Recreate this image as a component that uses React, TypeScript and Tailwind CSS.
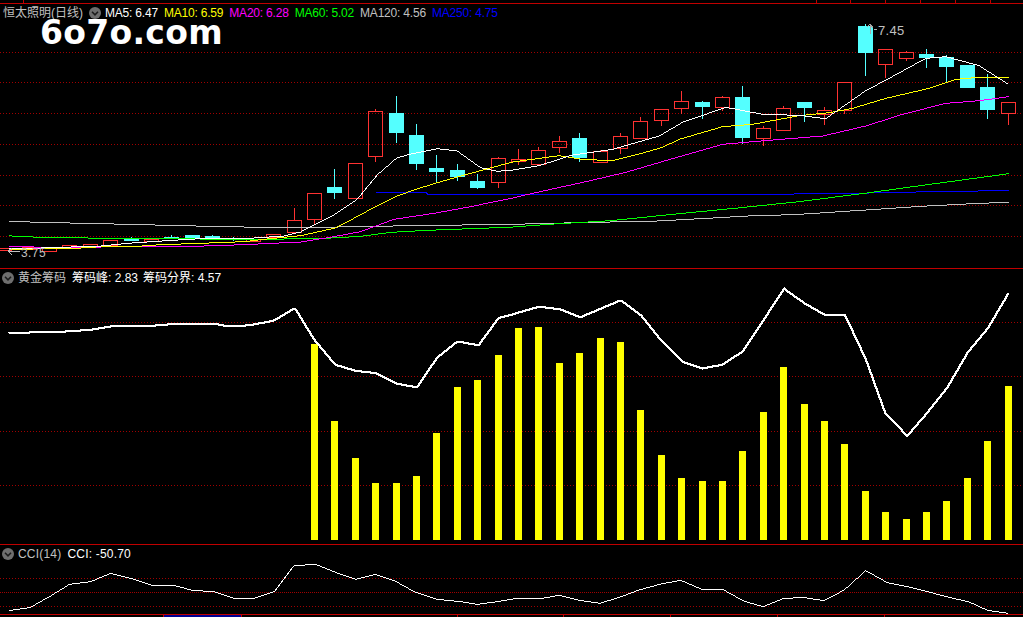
import React from "react";

type P = [number, number];
const L = (pts: P[]): P[] => pts.map(([x, y]) => [x / 3, y / 3]);
const R = (pts: P[]): P[] => pts.map(([x, y]) => [512 + x / 3, y / 3]);
// Resample a drawn series once per pixel column, so it renders as an aliased chart line.
const str = (pts: P[]) => {
  const out: string[] = [];
  for (let i = 0; i < pts.length - 1; i++) {
    const [x0, y0] = pts[i];
    const [x1, y1] = pts[i + 1];
    for (let x = Math.ceil(x0); x < x1; x++) {
      const y = y0 + ((y1 - y0) * (x - x0)) / (x1 - x0);
      out.push(`${x + 0.5},${Math.floor(y) + 0.5}`);
    }
  }
  return out.join(" ");
};

const ma120 = [...L([[24,664],[120,667],[300,671],[425,674],[545,677],[670,680],[850,683],[1095,680],[1220,677],[1465,674],[1536,673]]), ...R([[230,667],[415,664],[600,654],[725,647],[845,644],[1090,628],[1225,619],[1400,610],[1489,607]])];
const ma60 = [...L([[24,707],[57,710],[180,713],[425,716],[600,717],[790,718],[972,715],[1080,709],[1170,697],[1280,691],[1465,684],[1536,681]]), ...R([[125,672],[295,662],[480,643],[675,624],[860,605],[1070,578],[1230,556],[1489,521]])];
const ma250 = [...L([[1125,578],[1280,578],[1281,582],[1536,583]]), ...R([[845,583],[846,581],[1070,581],[1071,578],[1210,578],[1211,575],[1395,575],[1396,572],[1489,572]])];
const ma20 = [...L([[24,740],[180,742],[425,740],[610,738],[730,734],[900,726],[1000,710],[1080,695],[1180,658],[1300,640],[1400,622],[1536,594]]), ...R([[60,580],[220,545],[340,517],[500,470],[630,433],[780,420],[930,408],[1060,378],[1170,343],[1300,310],[1400,302],[1489,290]])];
const ma10 = [...L([[24,748],[170,746],[240,744],[300,740],[425,738],[480,734],[600,730],[730,725],[790,718],[900,707],[1000,685],[1060,655],[1125,620],[1190,588],[1240,570],[1310,548],[1380,528],[1440,512],[1536,486]]), ...R([[140,467],[210,478],[300,482],[380,462],[450,442],[500,418],[630,380],[720,373],[860,347],[950,338],[1020,325],[1120,295],[1250,265],[1330,238],[1400,232],[1489,232]])];
const ma5 = [...L([[24,746],[120,744],[240,740],[300,738],[380,730],[500,722],[600,716],[730,716],[850,708],[900,696],[1000,645],[1070,598],[1130,525],[1190,473],[1240,460],[1310,446],[1370,453],[1440,503],[1490,514],[1536,510]]), ...R([[80,497],[180,465],[300,448],[440,408],[510,367],[640,322],[750,343],[860,346],[940,356],[1060,272],[1130,235],[1240,175],[1300,170],[1400,197],[1489,254]])];

const shift = (pts: P[], oy: number): P[] => pts.map(([x, y]) => [x, y + oy]);
const peak = [...shift(L([[24,204],[88,201],[180,199],[270,193],[330,183],[455,181],[515,176],[640,175],[680,182],[730,181],[760,177],[820,166],[883,129],[940,222],[1003,298],[1065,316],[1125,323],[1189,355],[1250,366],[1310,278],[1372,228],[1435,240],[1495,158]]), 265), ...shift(R([[0,147],[80,124],[140,131],[203,156],[325,105],[385,150],[445,225],[510,290],[570,309],[630,298],[692,258],[815,71],[877,115],[937,149],[997,149],[1060,283],[1118,443],[1184,513],[1243,445],[1303,370],[1366,262],[1426,190],[1489,83]]), 265)];
const cci = [...shift(L([[24,212],[88,203],[150,168],[207,133],[270,125],[330,100],[390,115],[455,136],[520,136],[575,151],[640,155],[700,175],[762,175],[822,154],[880,77],[945,73],[1005,97],[1065,118],[1125,103],[1185,124],[1245,157],[1310,178],[1380,185],[1430,193],[1490,185]]), 540), ...shift(R([[0,177],[90,175],[140,166],[200,181],[262,190],[320,172],[380,150],[445,132],[505,121],[570,149],[632,149],[695,184],[752,200],[812,176],[870,172],[935,182],[995,150],[1060,92],[1125,128],[1185,140],[1245,155],[1310,172],[1370,186],[1425,211],[1487,220]]), 540)];

// c, top, bottom, high, low, up
type C = [number, number, number, number, number, boolean];
const candles: C[] = [
  [4.5,248,250,248,250,true],[29.5,247,249,247,249,true],[49.5,248,251,248,251,true],[69.5,245,248,245,248,true],
  [90.5,244,246,244,246,true],[110.5,240,245,240,245,true],[131.5,239,239,237,241,false],[151.5,239,241,239,241,true],
  [171.5,237,238,235,238,false],[192.5,235,238,235,238,false],[212.5,236,237,235,238,false],[233.5,238,239,237,241,false],
  [253.5,239,241,239,241,true],[273.5,234,237,234,239,true],
  [294.5,220,232,208,232,true],[314.5,193,219,193,224,true],[334.5,187,192,169,199,false],[355.5,163,198,163,198,true],
  [375.5,111,156,109,162,true],[396.5,113,132,96,143,false],[416.5,135,163,124,170,false],[436.5,168,171,155,182,false],
  [457.5,170,176,164,181,false],[477.5,181,187,174,189,false],[498.5,158,182,157,188,true],[518.5,159,161,149,165,true],
  [538.5,150,164,147,164,true],[559.5,141,147,136,153,true],[579.5,138,157,133,162,false],[600.5,151,162,150,162,true],
  [620.5,136,148,133,154,true],[640.5,121,138,117,138,true],[661.5,109,120,109,126,true],[681.5,101,108,91,114,true],
  [702.5,102,106,101,119,false],[722.5,97,107,96,111,true],[742.5,97,137,86,144,false],[763.5,128,138,126,146,true],
  [783.5,108,130,106,130,true],[804.5,102,107,102,122,false],[824.5,110,114,107,125,true],[844.5,82,110,82,114,true],
  [865.5,26,52,24,76,false],[885.5,49,64,49,78,true],[906.5,52,58,51,61,true],[926.5,54,57,49,68,false],
  [946.5,57,66,55,82,false],[967.5,65,87,65,87,false],[987.5,87,109,74,119,false],[1008.5,102,113,102,125,true],
];

const bars: P[] = [
  [314.5,344],[334.5,421],[355.5,458],[375.5,483],[396.5,483],[416.5,476],[436.5,433],[457.5,387],[477.5,380],[498.5,355],
  [518.5,328],[538.5,327],[559.5,363],[579.5,353],[600.5,338],[620.5,342],[640.5,410],[661.5,455],[681.5,478],[702.5,481],
  [722.5,481],[742.5,451],[763.5,412],[783.5,367],[804.5,404],[824.5,421],[844.5,444],[865.5,491],[885.5,512],[906.5,519],
  [926.5,512],[946.5,501],[967.5,478],[987.5,441],[1008.5,386],
];

const Grid = ({ ys, dense = [] as number[] }: { ys: number[]; dense?: number[] }) => (
  <>
    {ys.map((y) => (
      <line key={y} x1={0} x2={1023} y1={y + 0.5} y2={y + 0.5} stroke="#a00000" shapeRendering="auto" strokeDasharray={dense.includes(y) ? "1 1" : "1 2"} />
    ))}
  </>
);

const Toggle = () => (
  <svg width="12" height="12" viewBox="0 0 12 12" className="shrink-0">
    <circle cx="6" cy="6" r="6" fill="#6e6e6e" />
    <path d="M3 4.8 L6 7.8 L9 4.8" fill="none" stroke="#1c1c1c" strokeWidth="1.6" />
  </svg>
);

const font = "font-['Liberation_Sans','Noto_Sans_CJK_SC',sans-serif]";

export default function App() {
  return (
    <div className={`w-[1023px] h-[617px] bg-black flex flex-col overflow-hidden text-xs leading-none whitespace-nowrap ${font}`}>
      {/* top time ticks */}
      <svg width="1023" height="3" className="block shrink-0">
        {[23, 816, 850, 885, 920, 955, 990].map((x) => (
          <rect key={x} x={x} y={0} width={1} height={3} fill="#c00000" />
        ))}
      </svg>

      {/* main pane */}
      <section className="relative h-[265px] shrink-0 border-t border-[#c00000]">
        <svg width="1023" height="264" viewBox="0 4 1023 264" shapeRendering="crispEdges" className="block">
          <Grid ys={[52, 82, 113, 144, 175, 205, 236]} />
          {candles.map(([c, t, b, h, l, up]) => {
            const col = up ? "#ff3232" : "#54ffff";
            return (
              <g key={c} stroke={col}>
                {h < t && <line x1={c} x2={c} y1={h} y2={t} />}
                {l > b && <line x1={c} x2={c} y1={b} y2={l} />}
                <rect x={c - 7} y={t + 0.5} width={14} height={Math.max(b - t, 1)} fill={up ? "none" : col} />
              </g>
            );
          })}
          <polyline points={str(ma120)} fill="none" stroke="#c0c0c0" />
          <polyline points={str(ma250)} fill="none" stroke="#0000ff" />
          <polyline points={str(ma60)} fill="none" stroke="#00ff00" />
          <polyline points={str(ma20)} fill="none" stroke="#ff00ff" />
          <polyline points={str(ma10)} fill="none" stroke="#ffff00" />
          <polyline points={str(ma5)} fill="none" stroke="#ffffff" />
          <path d="M8.5 251 L12 248 M8.5 251 L12 255 M8.5 251 L20 251" fill="none" stroke="#c0c0c0" />
          <path d="M870.5 24 L867 27 M870.5 24 L873 28 M870.5 24 L870.5 34 M874 29.5 L877 29.5" fill="none" stroke="#a8a8a8" />
        </svg>
        <header className="absolute left-[3px] top-[3px] flex items-center">
          <span className="text-[#c0c0c0] w-[86px]">恒太照明(日线)</span>
          <Toggle />
          <div className="flex gap-[6px] ml-[4px] tracking-[-0.2px]">
            <span className="text-white">MA5: 6.47</span>
            <span className="text-[#ffff00]">MA10: 6.59</span>
            <span className="text-[#ff00ff]">MA20: 6.28</span>
            <span className="text-[#00ff00]">MA60: 5.02</span>
            <span className="text-[#c0c0c0]">MA120: 4.56</span>
            <span className="text-[#0000ff]">MA250: 4.75</span>
          </div>
        </header>
        <div className="absolute left-[40px] top-[16px] text-[33px] leading-[26px] tracking-[0.3px] font-bold text-white font-['DejaVu_Sans',sans-serif]">
          6o7o.com
        </div>
        <span className="absolute left-[21px] top-[243px] text-[#c0c0c0] tracking-[0.4px]">3.75</span>
        <span className="absolute left-[878px] top-[20px] text-[#c0c0c0] text-[13px] tracking-[0.3px]">7.45</span>
      </section>

      {/* chip pane */}
      <section className="relative h-[276px] shrink-0 border-t border-[#c00000]">
        <svg width="1023" height="275" viewBox="0 269 1023 275" shapeRendering="crispEdges" className="block">
          <Grid ys={[322, 376, 431, 485]} />
          {bars.map(([c, t]) => (
            <rect key={c} x={c - 3.5} y={t} width={7} height={540 - t} fill="#ffff00" />
          ))}
          <polyline points={str(peak)} fill="none" stroke="#ffffff" strokeWidth="2" />
        </svg>
        <header className="absolute left-[2px] top-[3px] flex items-center">
          <Toggle />
          <span className="ml-[4px] text-[#c0c0c0]">黄金筹码</span>
          <span className="ml-[6px] text-white">筹码峰: 2.83</span>
          <span className="ml-[5px] text-white">筹码分界: 4.57</span>
        </header>
      </section>

      {/* cci pane */}
      <section className="relative h-[70px] shrink-0 border-t border-[#c00000]">
        <svg width="1023" height="69" viewBox="0 545 1023 69" shapeRendering="crispEdges" className="block">
          <Grid ys={[578, 592, 606]} dense={[592]} />
          <polyline points={str(cci)} fill="none" stroke="#ffffff" />
        </svg>
        <header className="absolute left-[2px] top-[3px] flex items-center">
          <Toggle />
          <span className="ml-[4px] text-[#c0c0c0] tracking-[0.2px]">CCI(14)</span>
          <span className="ml-[6px] text-white tracking-[0.2px]">CCI: -50.70</span>
        </header>
      </section>

      {/* bottom axis */}
      <div className="border-t border-[#c00000] h-[3px] shrink-0">
        <svg width="1023" height="2" className="block">
          <rect x={163} y={0} width={78} height={2} fill="#000090" />
          {[163, 241, 457, 563, 670, 777, 884].map((x) => (
            <rect key={x} x={x} y={0} width={1} height={2} fill="#c00000" />
          ))}
        </svg>
      </div>
    </div>
  );
}
